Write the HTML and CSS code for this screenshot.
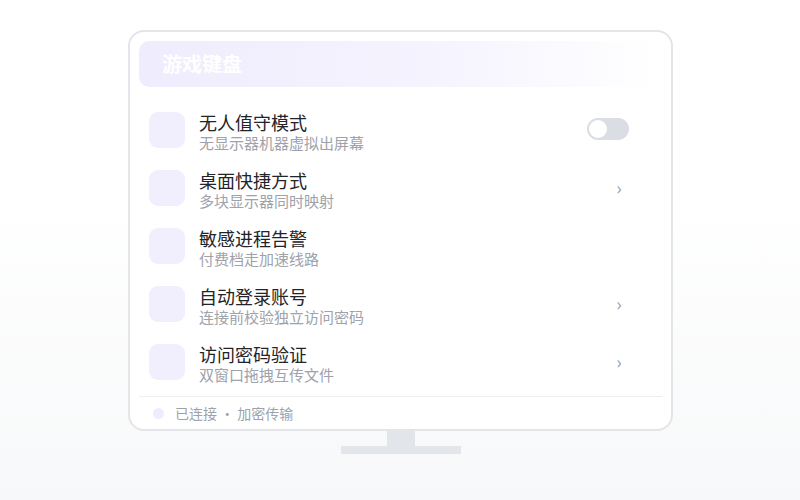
FILE: index.html
```html
<!DOCTYPE html>
<html lang="zh-CN">
<head>
<meta charset="utf-8">
<link rel="stylesheet" href="styles.css">
</head>
<body>
<div class="scene">
  <div class="monitor">
    <div class="header">游戏键盘</div>
    <div class="list">
      <div class="row">
        <div class="icon"></div>
        <div class="text"><div class="title">无人值守模式</div><div class="sub">无显示器机器虚拟出屏幕</div></div>
        <div class="toggle"><span class="knob"></span></div>
      </div>
      <div class="row">
        <div class="icon"></div>
        <div class="text"><div class="title">桌面快捷方式</div><div class="sub">多块显示器同时映射</div></div>
        <div class="chev">›</div>
      </div>
      <div class="row">
        <div class="icon"></div>
        <div class="text"><div class="title">敏感进程告警</div><div class="sub">付费档走加速线路</div></div>
      </div>
      <div class="row">
        <div class="icon"></div>
        <div class="text"><div class="title">自动登录账号</div><div class="sub">连接前校验独立访问密码</div></div>
        <div class="chev">›</div>
      </div>
      <div class="row">
        <div class="icon"></div>
        <div class="text"><div class="title">访问密码验证</div><div class="sub">双窗口拖拽互传文件</div></div>
        <div class="chev">›</div>
      </div>
    </div>
    <div class="footer"><span class="dot"></span><span class="status">已连接 · 加密传输</span></div>
  </div>
  <div class="neck"></div>
  <div class="base"></div>
</div>
</body>
</html>
```
FILE: styles.css
```css
html, body {
  margin: 0;
  height: 100%;
}
body {
  background: linear-gradient(180deg, #ffffff 0%, #ffffff 40%, #f7f8f9 100%);
  font-family: "Noto Sans CJK SC", "Noto Sans", sans-serif;
}
.scene {
  display: flex;
  flex-direction: column;
  align-items: center;
  padding-top: 30px;
  padding-left: 1px;
}
.monitor {
  box-sizing: border-box;
  width: 545px;
  height: 401px;
  background: #fff;
  border: 2px solid #e3e5e9;
  border-radius: 16px;
  padding: 9px 9px 0 9px;
  display: flex;
  flex-direction: column;
}
.header {
  height: 46px;
  border-radius: 10px;
  background: linear-gradient(90deg, #efedfd 0%, #f5f3fe 55%, rgba(255,255,255,0) 100%);
  color: #fff;
  font-size: 20px;
  font-weight: 700;
  line-height: 46px;
  padding-left: 23px;
}
.list {
  margin-top: 14px;
  display: flex;
  flex-direction: column;
}
.row {
  height: 58px;
  display: flex;
  align-items: center;
  padding: 0 33px 0 10px;
}
.icon {
  width: 36px;
  height: 36px;
  border-radius: 9px;
  background: #f1effd;
  flex: none;
  margin-right: 14px;
}
.text {
  flex: 1;
  display: flex;
  flex-direction: column;
  margin-top: 3px;
}
.title {
  font-size: 18px;
  line-height: 22px;
  color: #222429;
}
.sub {
  font-size: 15px;
  line-height: 20px;
  color: #9ea2aa;
}
.toggle {
  width: 42px;
  height: 22px;
  border-radius: 11px;
  background: #dadde3;
  display: flex;
  align-items: center;
  padding: 0 2px;
  box-sizing: border-box;
  margin-top: -2px;
}
.knob {
  width: 18px;
  height: 18px;
  border-radius: 50%;
  background: #fff;
}
.chev {
  width: 20px;
  text-align: center;
  color: #9aa0a9;
  font-size: 18px;
  line-height: 20px;
  margin-top: -2px;
}
.footer {
  margin-top: 5px;
  border-top: 1px solid #eceef2;
  height: 32px;
  display: flex;
  align-items: center;
  padding-left: 14px;
}
.dot {
  width: 11px;
  height: 11px;
  border-radius: 50%;
  background: #efedfd;
  margin-right: 11px;
}
.status {
  font-size: 14px;
  color: #9ea2aa;
}
.neck {
  width: 28px;
  height: 15px;
  background: #e2e5e9;
}
.base {
  width: 120px;
  height: 8px;
  background: #e2e5e9;
}
```
